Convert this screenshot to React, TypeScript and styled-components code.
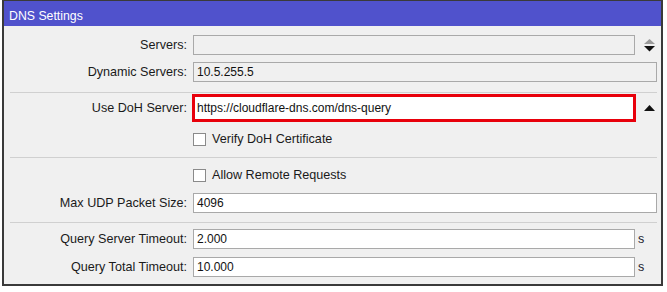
import React from "react";
import styled, { createGlobalStyle } from "styled-components";

const Global = createGlobalStyle`
  html, body { margin: 0; padding: 0; background: #ffffff; }
  body { font-family: "Liberation Sans", Arial, sans-serif; font-size: 12px; color: #1a1a1a; }
`;

const Frame = styled.div`
  box-sizing: border-box;
  margin-left: 2px;
  width: 661px;
  height: 286px;
  border: 2px solid #3a3a3a;
  border-top-width: 1px;
  background: #f0f0f0;
  display: flex;
  flex-direction: column;
`;

const TitleBar = styled.div`
  box-sizing: border-box;
  height: 25px;
  padding: 8px 0 0 5px;
  line-height: 14px;
  background: #5052cc;
  color: #ffffff;
  font-size: 12.3px;
`;

const Body = styled.div`
  flex: 1;
  padding: 9px 4px 0 0;
  display: flex;
  flex-direction: column;
`;

const Row = styled.div<{ $mt?: number; $h?: number }>`
  display: flex;
  align-items: center;
  height: ${(p) => p.$h ?? 20}px;
  margin-top: ${(p) => p.$mt ?? 0}px;
`;

const Label = styled.div`
  width: 183px;
  margin-right: 6px;
  text-align: right;
  white-space: nowrap;
  font-size: 12.6px;
  color: #1a1a1a;
`;

const Field = styled.div<{ $ro?: boolean; $hl?: boolean }>`
  box-sizing: border-box;
  flex: 1;
  height: 20px;
  line-height: 18px;
  padding: 0 3px;
  border: 1px solid #a9a9a9;
  background: ${(p) => (p.$ro ? "#f0f0f0" : "#ffffff")};
  color: #111111;
  font-size: 12px;
  white-space: nowrap;
  overflow: hidden;
  ${(p) => (p.$hl ? "outline: 3px solid #e8000b; outline-offset: -2px;" : "")}
`;

const Trail = styled.div`
  width: 22px;
  display: flex;
  align-items: center;
  justify-content: flex-end;
  padding-right: 2px;
  box-sizing: border-box;
`;

const Unit = styled.div`
  width: 22px;
  padding-left: 3px;
  box-sizing: border-box;
  font-size: 12.5px;
  color: #1a1a2e;
`;

const Separator = styled.div<{ $mt: number; $mb: number }>`
  height: 1px;
  background: #d0d0d0;
  margin: ${(p) => p.$mt}px 0 ${(p) => p.$mb}px 6px;
`;

const CheckRow = styled(Row)`
  padding-left: 189px;
  gap: 6px;
  font-size: 12.6px;
`;

const Box = styled.span`
  box-sizing: border-box;
  width: 13px;
  height: 13px;
  border: 1px solid #8a8a8a;
  background: #ffffff;
  display: inline-block;
`;

const UpDown = () => (
  <svg width="11" height="13" viewBox="0 0 11 13">
    <polygon points="5.5,0 11,5 0,5" fill="#9a9a9a" />
    <polygon points="0,7 11,7 5.5,12.5" fill="#111" />
  </svg>
);

const Up = () => (
  <svg width="11" height="6" viewBox="0 0 11 6">
    <polygon points="5.5,0 11,6 0,6" fill="#111" />
  </svg>
);

export default function App() {
  return (
    <>
      <Global />
      <Frame>
        <TitleBar>DNS Settings</TitleBar>
        <Body>
          <Row>
            <Label>Servers:</Label>
            <Field $ro />
            <Trail>
              <UpDown />
            </Trail>
          </Row>
          <Row $mt={7}>
            <Label>Dynamic Servers:</Label>
            <Field $ro>10.5.255.5</Field>
          </Row>
          <Separator $mt={10} $mb={0} />
          <Row $mt={2} $h={26}>
            <Label>Use DoH Server:</Label>
            <Field $hl style={{ height: 26, lineHeight: "24px" }}>https://cloudflare-dns.com/dns-query</Field>
            <Trail>
              <Up />
            </Trail>
          </Row>
          <CheckRow $mt={8}>
            <Box />
            <span>Verify DoH Certificate</span>
          </CheckRow>
          <Separator $mt={8} $mb={0} />
          <CheckRow $mt={7}>
            <Box />
            <span>Allow Remote Requests</span>
          </CheckRow>
          <Row $mt={8}>
            <Label>Max UDP Packet Size:</Label>
            <Field>4096</Field>
          </Row>
          <Separator $mt={9} $mb={0} />
          <Row $mt={6}>
            <Label>Query Server Timeout:</Label>
            <Field>2.000</Field>
            <Unit>s</Unit>
          </Row>
          <Row $mt={8}>
            <Label>Query Total Timeout:</Label>
            <Field>10.000</Field>
            <Unit>s</Unit>
          </Row>
        </Body>
      </Frame>
    </>
  );
}
